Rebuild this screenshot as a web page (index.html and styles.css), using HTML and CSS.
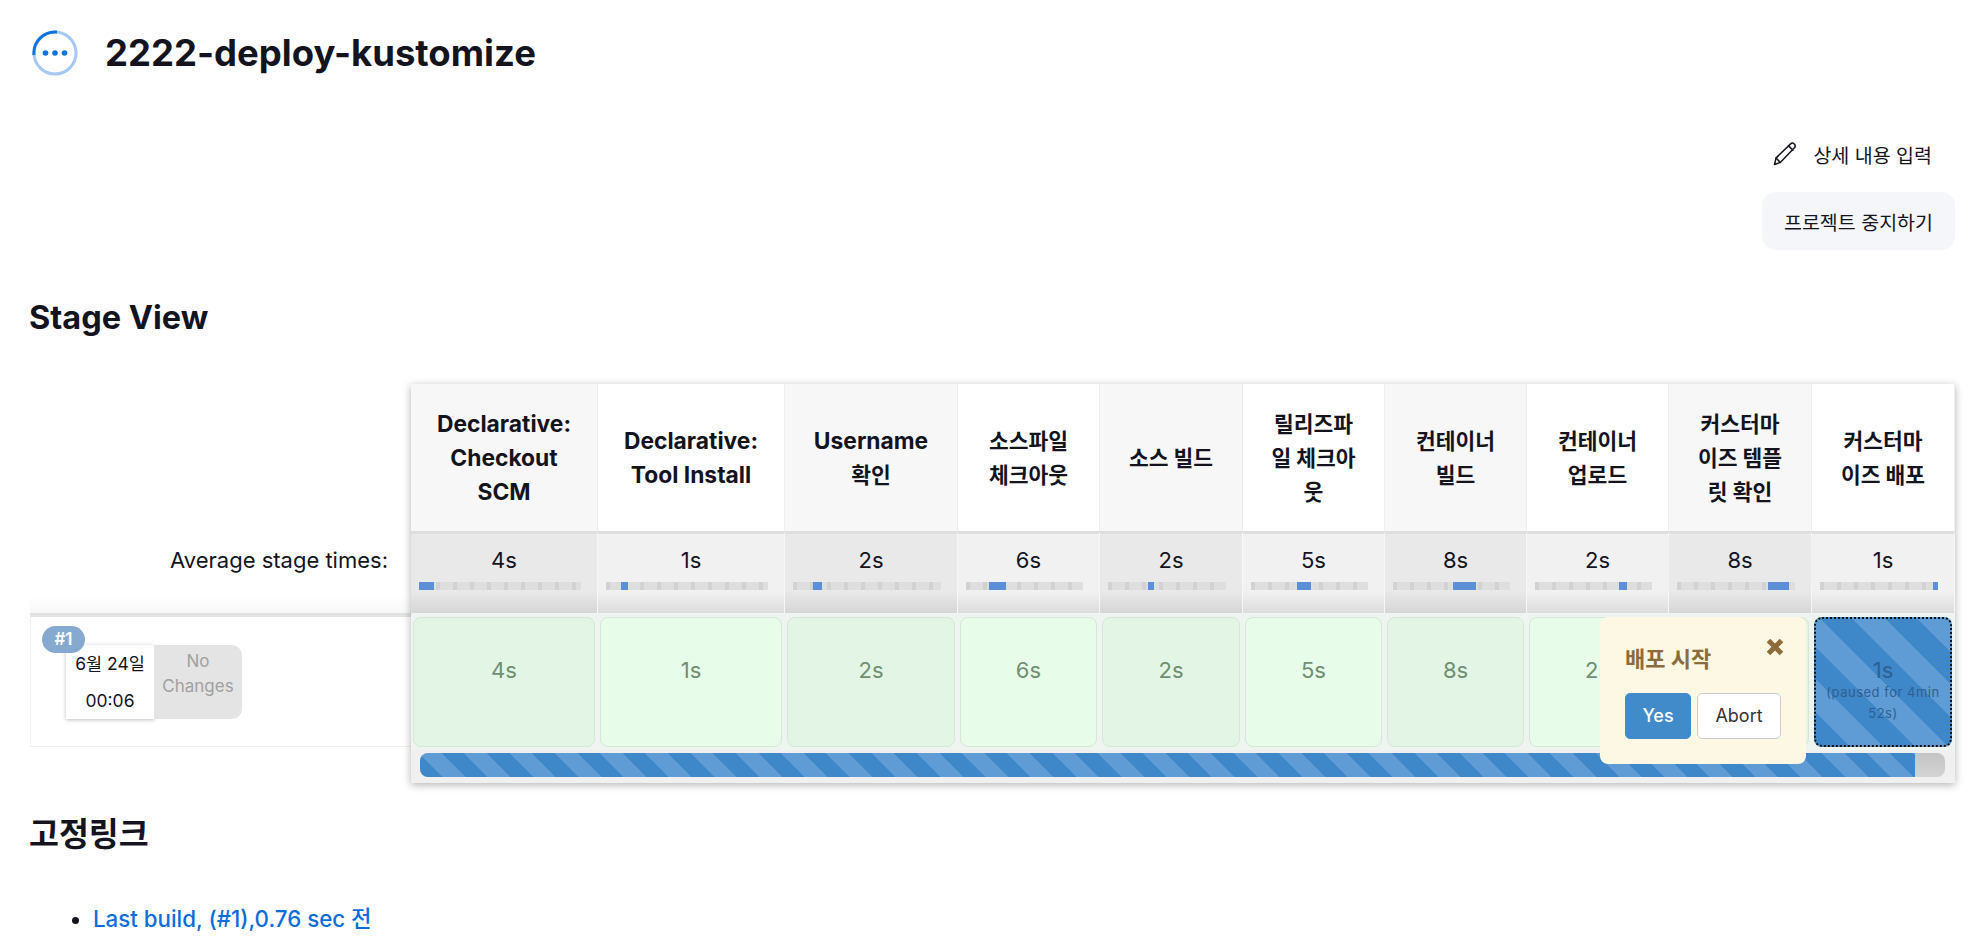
FILE: index.html
```html
<!DOCTYPE html>
<html lang="ko">
<head>
	<meta charset="UTF-8">
	<title>2222-deploy-kustomize</title>
	<link rel="stylesheet" href="styles.css">
</head>
<body>
	<div class="title-row">
		<svg class="status-icon" viewBox="0 0 46 46" width="46" height="46">
			<circle cx="23" cy="23" r="21" fill="none" stroke="#a6c9f3" stroke-width="3"/>
			<path d="M25 2.1A21 21 0 0 0 2 25" fill="none" stroke="#0f73e0" stroke-width="3"/>
			<circle cx="13.5" cy="23" r="2.8" fill="#0f73e0"/>
			<circle cx="23" cy="23" r="2.8" fill="#0f73e0"/>
			<circle cx="32.5" cy="23" r="2.8" fill="#0f73e0"/>
		</svg>
		<h1>2222-deploy-kustomize</h1>
	</div>

	<div class="actions">
		<a class="edit-link">
			<svg viewBox="0 0 24 24" width="24" height="24" fill="none" stroke="#14141f" stroke-width="1.5" stroke-linejoin="round" stroke-linecap="round">
				<path d="M1.5 22.5l1.6-6.6L17.6 1.9c1-1 2.6-1 3.7.1 1.1 1.1 1.1 2.7.1 3.7L7.3 20.4z"/>
				<path d="M3.1 15.9l4.2 4.5"/>
				<path d="M15.6 3.9l4.3 4.3"/>
			</svg>
			<span>상세 내용 입력</span>
		</a>
		<a class="stop-btn">프로젝트 중지하기</a>
	</div>

	<h2 class="stage-title">Stage View</h2>

	<div class="stage-view">
		<div class="side">
			<div class="avg-label">Average stage times:</div>
			<div class="build-row">
				<div class="build-card">
					<span class="badge">#1</span>
					<div class="build-date">
						<div>6월 24일</div>
						<div>00:06</div>
					</div>
					<div class="build-changes">No Changes</div>
				</div>
			</div>
		</div>

		<div class="stage-table">
			<div class="head"><span class="en">Declarative: Checkout SCM</span></div>
			<div class="head"><span class="en">Declarative: Tool Install</span></div>
			<div class="head"><span><span class="en">Username</span><br>확인</span></div>
			<div class="head">소스파일 체크아웃</div>
			<div class="head">소스 빌드</div>
			<div class="head">릴리즈파일 체크아웃</div>
			<div class="head">컨테이너 빌드</div>
			<div class="head">컨테이너 업로드</div>
			<div class="head">커스터마이즈 템플릿 확인</div>
			<div class="head">커스터마이즈 배포</div>

			<div class="avg"><span>4s</span><div class="bar"><i style="margin-left:0;width:9.2%"></i></div></div>
			<div class="avg"><span>1s</span><div class="bar"><i style="margin-left:9.2%;width:4.3%"></i></div></div>
			<div class="avg"><span>2s</span><div class="bar"><i style="margin-left:13.4%;width:6%"></i></div></div>
			<div class="avg"><span>6s</span><div class="bar"><i style="margin-left:19.5%;width:14.4%"></i></div></div>
			<div class="avg"><span>2s</span><div class="bar"><i style="margin-left:34%;width:5%"></i></div></div>
			<div class="avg"><span>5s</span><div class="bar"><i style="margin-left:39%;width:12.7%"></i></div></div>
			<div class="avg"><span>8s</span><div class="bar"><i style="margin-left:51.7%;width:19.5%"></i></div></div>
			<div class="avg"><span>2s</span><div class="bar"><i style="margin-left:72%;width:6.8%"></i></div></div>
			<div class="avg"><span>8s</span><div class="bar"><i style="margin-left:77.3%;width:17.6%"></i></div></div>
			<div class="avg"><span>1s</span><div class="bar"><i style="margin-left:95.8%;width:4.2%"></i></div></div>

			<div class="cell-wrap"><div class="cell">4s</div></div>
			<div class="cell-wrap"><div class="cell">1s</div></div>
			<div class="cell-wrap"><div class="cell">2s</div></div>
			<div class="cell-wrap"><div class="cell">6s</div></div>
			<div class="cell-wrap"><div class="cell">2s</div></div>
			<div class="cell-wrap"><div class="cell">5s</div></div>
			<div class="cell-wrap"><div class="cell">8s</div></div>
			<div class="cell-wrap"><div class="cell">2s</div></div>
			<div class="cell-wrap"><div class="cell">8s</div></div>
			<div class="cell-wrap"><div class="cell paused">1s<small>(paused for 4min 52s)</small></div></div>

			<div class="progress-row">
				<div class="progress"><div class="progress-fill"></div></div>
			</div>

			<div class="popup">
				<div class="popup-top">
					<span class="popup-title">배포 시작</span>
					<svg class="popup-close" viewBox="0 0 18 18" width="18" height="18">
						<path d="M2.5 2.5l13 13M15.5 2.5l-13 13" stroke="#8a6d3b" stroke-width="5"/>
					</svg>
				</div>
				<div class="popup-btns">
					<button class="btn btn-yes">Yes</button>
					<button class="btn btn-abort">Abort</button>
				</div>
			</div>
		</div>
	</div>

	<h2 class="links-title">고정링크</h2>
	<ul class="links">
		<li><a>Last build, (#1),0.76 sec 전</a></li>
	</ul>
</body>
</html>
```

FILE: styles.css
```css
html, body, div, h1, h2, ul, li {
	padding: 0;
	margin: 0;
}
html {
	overflow: hidden;
}
body {
	padding: 30px 25px 0 30px;
	background: #fff;
	color: #14141f;
	font-family: Inter, "Noto Sans CJK KR", sans-serif;
	font-size: 22px;
}
.title-row {
	display: flex;
	align-items: center;
	height: 46px;
}
.status-icon {
	margin-left: 2px;
	margin-right: 27px;
}
h1 {
	font-size: 36.5px;
	font-weight: 700;
	line-height: 46px;
}
.actions {
	display: flex;
	flex-direction: column;
	align-items: flex-end;
	margin-top: 63px;
}
.edit-link {
	display: flex;
	align-items: center;
	gap: 16px;
	height: 30px;
	padding-right: 23px;
	font-size: 19.5px;
}
.stop-btn {
	display: flex;
	align-items: center;
	height: 58px;
	margin-top: 23px;
	padding: 0 22px;
	background: #f5f6f9;
	border-radius: 14px;
	font-size: 19.5px;
}
.stage-title {
	margin-top: 49px;
	margin-left: -1px;
	font-size: 32.5px;
	font-weight: 700;
	line-height: 38px;
}
.stage-view {
	display: grid;
	grid-template-columns: 381px 1544px;
	margin-top: 47px;
}
.avg-label {
	height: 82px;
	margin-top: 147px;
	padding: 15px 23px 0 0;
	box-sizing: border-box;
	text-align: right;
	line-height: 28px;
	background: linear-gradient(to bottom, #fff 80%, #f7f7f7);
}
.build-row {
	height: 134px;
	box-sizing: border-box;
	padding: 28px 0 0 35px;
	border-top: 4px solid #e2e2e2;
	border-left: 1px solid #f0f0f0;
	border-bottom: 1px solid #eee;
}
.build-card {
	position: relative;
	display: flex;
	width: 176px;
	height: 74px;
}
.badge {
	position: absolute;
	left: -24px;
	top: -19px;
	width: 43px;
	height: 27px;
	background: #86a9cf;
	border-radius: 14px;
	color: #fff;
	font-size: 17px;
	font-weight: 600;
	line-height: 27px;
	text-align: center;
}
.build-date {
	width: 88px;
	box-shadow: 0 1px 4px rgba(0,0,0,.25);
	font-size: 17.5px;
	line-height: 37px;
	text-align: center;
}
.build-changes {
	width: 88px;
	box-sizing: border-box;
	padding: 4px 6px 0;
	background: #e4e4e4;
	border-radius: 0 10px 10px 0;
	color: #a0a0a0;
	font-size: 17px;
	line-height: 25px;
	text-align: center;
}
.stage-table {
	position: relative;
	display: grid;
	grid-template-columns: 187px 187px 173px 142px 143px 142px 142px 142px 143px 143px;
	grid-template-rows: 147px 82px 137px 33px;
	box-shadow: 0 2px 8px rgba(0,0,0,.3);
}
.head {
	display: flex;
	align-items: center;
	justify-content: center;
	padding: 0 26px;
	border-right: 1px solid #eee;
	font-size: 21.5px;
	font-weight: 700;
	line-height: 34px;
	text-align: center;
}
.head .en {
	font-size: 22.8px;
}
.head:nth-child(odd) {
	background: #f7f7f7;
}
.head:nth-child(even) {
	background: #fff;
}
.avg {
	padding: 14px 16px 0 8px;
	border-top: 3px solid #dedede;
	border-right: 1px solid #f6f6f6;
	text-align: center;
	line-height: 24px;
}
.avg:nth-child(odd) {
	background: linear-gradient(to bottom, #e9e9e9 72%, #d6d6d6);
}
.avg:nth-child(even) {
	background: linear-gradient(to bottom, #f1f1f1 72%, #dcdcdc);
}
.avg span {
	display: block;
	margin-left: 8px;
}
.bar {
	display: flex;
	height: 8px;
	margin-top: 10px;
	background: repeating-linear-gradient(90deg, #d2d2d2 0, #d2d2d2 4px, #dedede 4px, #dedede 17px);
}
.bar i {
	display: block;
	background: #5b8fd6;
}
.cell-wrap {
	padding: 4px 3px 3px 2px;
	background: #eef4ef;
}
.cell {
	height: 100%;
	box-sizing: border-box;
	padding-top: 40px;
	border: 1px solid #d6e6d7;
	border-radius: 8px;
	color: #6f8f72;
	line-height: 24px;
	text-align: center;
}
.cell-wrap:nth-child(odd) .cell {
	background: #e3f6e5;
}
.cell-wrap:nth-child(even) .cell {
	background: #e8fde9;
}
.cell-wrap:nth-child(n) .paused {
	padding: 36px 4px 0;
	background: repeating-linear-gradient(45deg, #3e87c8 0, #3e87c8 23px, #5f9bd5 23px, #5f9bd5 46px);
	border: 2px dotted #111;
	color: #2f5f93;
	line-height: 30px;
}
.paused small {
	display: block;
	margin-top: -3px;
	font-size: 13px;
	letter-spacing: .5px;
	line-height: 21px;
}
.progress-row {
	grid-column: 1 / -1;
	padding: 3px 10px 6px 9px;
	background: #f0f0f0;
}
.progress {
	height: 24px;
	background: linear-gradient(to bottom, #c4c4c4, #d4d4d4);
	border-radius: 8px;
	overflow: hidden;
}
.progress-fill {
	width: 98%;
	height: 100%;
	background: repeating-linear-gradient(45deg, #3e87c8 0, #3e87c8 16px, #5f9bd5 16px, #5f9bd5 32px);
}
.popup {
	position: absolute;
	right: 149px;
	top: 233px;
	width: 206px;
	height: 147px;
	box-sizing: border-box;
	padding: 22px 25px 0;
	background: #fcf8e3;
	border-radius: 8px;
}
.popup-top {
	display: flex;
	justify-content: space-between;
	align-items: flex-start;
	height: 54px;
}
.popup-title {
	color: #8a6d3b;
	font-weight: 700;
	line-height: 40px;
}
.popup-close {
	margin-top: -1px;
	margin-right: -3px;
}
.popup-btns {
	display: flex;
	gap: 6px;
}
.btn {
	height: 46px;
	border-radius: 5px;
	font-family: inherit;
	font-size: 18px;
	line-height: 44px;
	padding: 0;
}
.btn-yes {
	width: 66px;
	background: #428bca;
	border: 1px solid #428bca;
	color: #fff;
	font-weight: 500;
}
.btn-abort {
	width: 84px;
	background: #fff;
	border: 1px solid #ccc;
	color: #333;
}
.links-title {
	margin-top: 33px;
	margin-left: -1px;
	font-size: 32.5px;
	font-weight: 700;
	line-height: 38px;
}
.links {
	margin-top: 50px;
	padding-left: 63px;
	font-size: 22.3px;
	line-height: 30px;
}
.links a {
	color: #0b6ed8;
	font-weight: 500;
}
```
